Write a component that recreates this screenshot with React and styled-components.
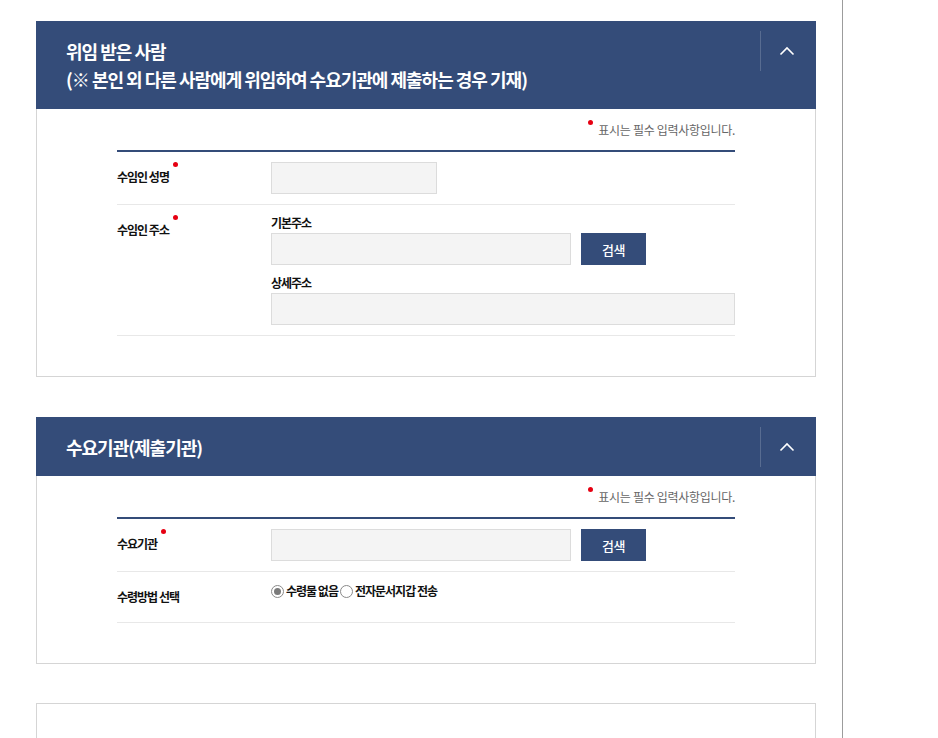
import React from "react";
import styled, { createGlobalStyle } from "styled-components";

const NAVY = "#344c79";

const GlobalStyle = createGlobalStyle`
  html, body { margin: 0; padding: 0; background: #fff; }
  body { font-family: "Noto Sans CJK KR", "Noto Sans", sans-serif; color: #111; }
  * { box-sizing: border-box; }
`;

const Page = styled.div`
  width: 843px;
  min-height: 100vh;
  border-right: 1px solid #9c9c9c;
  padding: 21px 26px 0 36px;
  display: flex;
  flex-direction: column;
  gap: 40px;
`;

const Panel = styled.section`
  display: flex;
  flex-direction: column;
`;

const Header = styled.div`
  background: ${NAVY};
  display: flex;
  align-items: flex-start;
  padding-left: 30px;
`;

const Title = styled.h2`
  flex: 1;
  margin: 0;
  padding: 16px 0 ${(p) => (p.$multi ? "16px" : "15px")};
  color: #fff;
  font-size: 18px;
  font-weight: 700;
  line-height: 28px;
  letter-spacing: -1px;
`;

const Toggle = styled.button`
  width: 56px;
  height: 40px;
  margin-top: 10px;
  border: 0;
  border-left: 1px solid rgba(255, 255, 255, 0.18);
  background: transparent;
  display: flex;
  align-items: center;
  justify-content: center;
  padding: 0 4px 0 0;
  cursor: pointer;
`;

const Body = styled.div`
  border: 1px solid #d5d5d5;
  border-top: 0;
  padding: 11px 80px 40px;
`;

const Note = styled.p`
  margin: 0 0 10px;
  text-align: right;
  font-size: 12px;
  line-height: 20px;
  color: #666;
  letter-spacing: -0.3px;
`;

const Dot = styled.span`
  display: inline-block;
  width: 5px;
  height: 5px;
  border-radius: 50%;
  background: #e60012;
  vertical-align: top;
  margin: ${(p) => (p.$note ? "0 5px 0 0" : "0 0 0 4px")};
`;

const Table = styled.div`
  border-top: 2px solid ${NAVY};
`;

const Row = styled.div`
  display: flex;
  align-items: flex-start;
  padding: 10px 0;
  border-bottom: 1px solid #e8e8e8;
`;

const Label = styled.div`
  width: 154px;
  flex: none;
  font-size: 12px;
  font-weight: 700;
  line-height: 30px;
  letter-spacing: -1px;
  color: #111;
`;

const Field = styled.div`
  flex: 1;
  display: flex;
  flex-direction: column;
`;

const SubLabel = styled.div`
  font-size: 12px;
  font-weight: 700;
  line-height: 16px;
  letter-spacing: -1px;
  margin: ${(p) => (p.$second ? "10px 0 2px" : "0 0 2px")};
`;

const InputRow = styled.div`
  display: flex;
  gap: 10px;
`;

const Input = styled.input`
  width: ${(p) => p.$w || "100%"};
  height: 32px;
  background: #f4f4f4;
  border: 1px solid #dcdcdc;
  border-radius: 0;
  outline: none;
  padding: 0 8px;
  font-family: inherit;
`;

const SearchButton = styled.button`
  width: 65px;
  height: 32px;
  border: 0;
  background: ${NAVY};
  color: #fff;
  font-family: inherit;
  font-size: 13px;
  font-weight: 500;
  letter-spacing: -0.5px;
  cursor: pointer;
`;

const RadioGroup = styled.div`
  display: flex;
  align-items: center;
  line-height: 18px;
`;

const RadioItem = styled.label`
  display: flex;
  align-items: center;
  gap: 2px;
  font-size: 12px;
  font-weight: 700;
  letter-spacing: -1px;
  color: #111;
  margin-right: 2px;
`;

const RadioCircle = styled.span`
  width: 13px;
  height: 13px;
  border-radius: 50%;
  border: 1px solid #8a8a8a;
  background: #fff;
  display: inline-flex;
  align-items: center;
  justify-content: center;
  &::after {
    content: "";
    width: 7px;
    height: 7px;
    border-radius: 50%;
    background: ${(p) => (p.$checked ? "#7a7a7a" : "transparent")};
  }
`;

const EmptyPanel = styled.div`
  border: 1px solid #d5d5d5;
  height: 60px;
  margin-top: -1px;
`;

const Chevron = () => (
  <svg width="16" height="10" viewBox="0 0 16 10" fill="none">
    <path d="M1.5 8.5 L8 2 L14.5 8.5" stroke="#fff" strokeWidth="1.6" />
  </svg>
);

function SectionHeader({ children, multi }) {
  return (
    <Header>
      <Title $multi={multi}>{children}</Title>
      <Toggle aria-label="접기">
        <Chevron />
      </Toggle>
    </Header>
  );
}

export default function App() {
  return (
    <>
      <GlobalStyle />
      <Page>
        <Panel>
          <SectionHeader multi>
            위임 받은 사람
            <br />
            (※ 본인 외 다른 사람에게 위임하여 수요기관에 제출하는 경우 기재)
          </SectionHeader>
          <Body>
            <Note>
              <Dot $note />
              표시는 필수 입력사항입니다.
            </Note>
            <Table>
              <Row>
                <Label>
                  수임인 성명
                  <Dot />
                </Label>
                <Field>
                  <Input $w="166px" />
                </Field>
              </Row>
              <Row>
                <Label>
                  수임인 주소
                  <Dot />
                </Label>
                <Field>
                  <SubLabel>기본주소</SubLabel>
                  <InputRow>
                    <Input $w="300px" />
                    <SearchButton>검색</SearchButton>
                  </InputRow>
                  <SubLabel $second>상세주소</SubLabel>
                  <Input />
                </Field>
              </Row>
            </Table>
          </Body>
        </Panel>

        <Panel>
          <SectionHeader>수요기관(제출기관)</SectionHeader>
          <Body>
            <Note>
              <Dot $note />
              표시는 필수 입력사항입니다.
            </Note>
            <Table>
              <Row>
                <Label>
                  수요기관
                  <Dot />
                </Label>
                <Field>
                  <InputRow>
                    <Input $w="300px" />
                    <SearchButton>검색</SearchButton>
                  </InputRow>
                </Field>
              </Row>
              <Row>
                <Label>수령방법 선택</Label>
                <Field>
                  <RadioGroup>
                    <RadioItem>
                      <RadioCircle $checked />
                      수령물 없음
                    </RadioItem>
                    <RadioItem>
                      <RadioCircle />
                      전자문서지갑 전송
                    </RadioItem>
                  </RadioGroup>
                </Field>
              </Row>
            </Table>
          </Body>
        </Panel>

        <EmptyPanel />
      </Page>
    </>
  );
}
